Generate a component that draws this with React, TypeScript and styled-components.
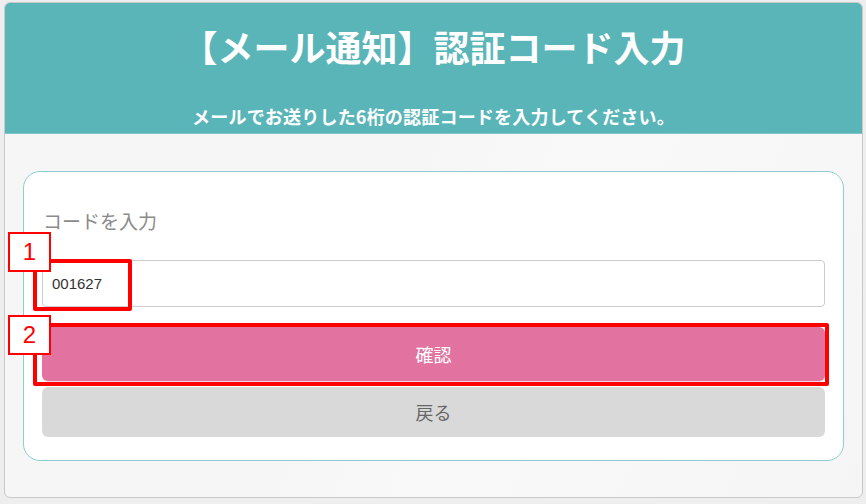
import React from "react";
import styled, { createGlobalStyle } from "styled-components";

const Global = createGlobalStyle`
  html, body { margin: 0; padding: 0; background: #eeeeee; }
  body { font-family: "Noto Sans CJK JP", "Noto Sans", sans-serif; }
  * { box-sizing: border-box; }
`;

const Page = styled.div`
  position: relative;
  width: 866px;
  height: 504px;
  padding: 2px 3px 6px 4px;
`;

const Frame = styled.div`
  height: 496px;
  border: 1px solid #c9c9c9;
  border-radius: 6px;
  overflow: hidden;
  display: flex;
  flex-direction: column;
  background: linear-gradient(115deg, #f6f6f6 0%, #f6f6f6 45%, #f9f9f9 60%, #f5f5f5 100%);
`;

const Header = styled.header`
  height: 131px;
  background: #5ab5b8;
  border-bottom: 1px solid #7ec7c9;
  display: flex;
  flex-direction: column;
  align-items: center;
  color: #fff;
`;

const Title = styled.h1`
  margin: 18px 0 0;
  font-size: 36px;
  line-height: 50px;
  font-weight: 700;
  letter-spacing: 0;
`;

const Subtitle = styled.p`
  margin: 33px 0 0;
  font-size: 18px;
  line-height: 24px;
  font-weight: 700;
  letter-spacing: 0.2px;
`;

const Body = styled.main`
  flex: 1;
  padding: 37px 18px 36px 18px;
`;

const Card = styled.section`
  height: 100%;
  background: #fff;
  border: 1px solid #8ecdd0;
  border-radius: 17px;
  padding: 37px 18px 0 18px;
  display: flex;
  flex-direction: column;
`;

const Label = styled.label`
  font-size: 19px;
  line-height: 24px;
  color: #8a8a8a;
  margin-left: 1px;
`;

const Input = styled.input`
  margin-top: 27px;
  height: 47px;
  width: 100%;
  border: 1px solid #cccccc;
  border-radius: 4px;
  padding: 0 9px;
  font-family: "Liberation Sans", Arial, sans-serif;
  font-size: 15px;
  color: #333;
  outline: none;
  background: #fff;
`;

const Button = styled.button<{ $variant: "primary" | "back" }>`
  width: 100%;
  border: none;
  border-radius: 6px;
  font-family: "Noto Sans CJK JP", sans-serif;
  font-size: 18px;
  cursor: pointer;
  display: flex;
  align-items: center;
  justify-content: center;
  ${(p) =>
    p.$variant === "primary"
      ? `
    margin-top: 20px;
    height: 54px;
    background: #e273a0;
    color: #fff;
    box-shadow: 0 1px 0 #f4d5e2;
  `
      : `
    margin-top: 6px;
    height: 50px;
    background: #d9d9d9;
    color: #666;
  `}
`;

const Highlight = styled.div<{ $x: number; $y: number; $w: number; $h: number }>`
  position: absolute;
  left: ${(p) => p.$x}px;
  top: ${(p) => p.$y}px;
  width: ${(p) => p.$w}px;
  height: ${(p) => p.$h}px;
  border: 4px solid #ff0000;
  border-radius: 2px;
  pointer-events: none;
`;

const Badge = styled.div<{ $x: number; $y: number }>`
  position: absolute;
  left: ${(p) => p.$x}px;
  top: ${(p) => p.$y}px;
  width: 43px;
  height: 40px;
  background: #fff;
  border: 2px solid #ff0000;
  color: #ff0000;
  font-family: "Liberation Sans", Arial, sans-serif;
  font-size: 24px;
  display: flex;
  align-items: center;
  justify-content: center;
`;

export default function App() {
  return (
    <>
      <Global />
      <Page>
        <Frame>
          <Header>
            <Title>【メール通知】認証コード入力</Title>
            <Subtitle>メールでお送りした6桁の認証コードを入力してください。</Subtitle>
          </Header>
          <Body>
            <Card>
              <Label>コードを入力</Label>
              <Input defaultValue="001627" />
              <Button $variant="primary">確認</Button>
              <Button $variant="back">戻る</Button>
            </Card>
          </Body>
        </Frame>
        <Highlight $x={33} $y={259} $w={99} $h={52} />
        <Highlight $x={33} $y={323} $w={796} $h={63} />
        <Badge $x={8} $y={232}>1</Badge>
        <Badge $x={8} $y={315}>2</Badge>
      </Page>
    </>
  );
}
